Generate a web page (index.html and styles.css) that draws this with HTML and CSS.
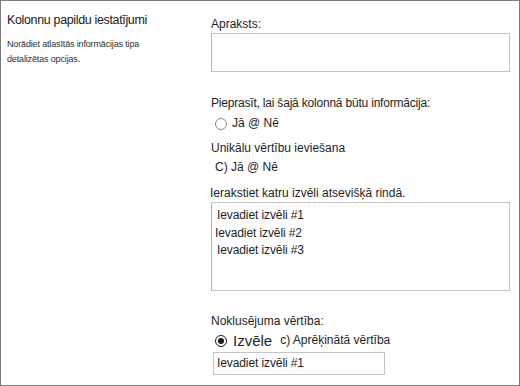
FILE: index.html
```html
<!DOCTYPE html>
<html>
<head>
<meta charset="utf-8">
<link rel="stylesheet" href="styles.css">
</head>
<body>
<div class="frame">
  <div class="side">
    <div class="side-title">Kolonnu papildu iestatījumi</div>
    <div class="side-desc">Norādiet atlasītās informācijas tipa detalizētas opcijas.</div>
  </div>
  <div class="main">
    <div class="label l-desc">Apraksts:</div>
    <div class="box box-desc"></div>

    <div class="label l-req">Pieprasīt, lai šajā kolonnā būtu informācija:</div>
    <div class="radio-row r-req"><span class="radio"></span><span class="rtext">Jā @ Nē</span></div>

    <div class="label l-uniq">Unikālu vērtību ieviešana</div>
    <div class="plain-row r-uniq">C) Jā @ Nē</div>

    <div class="label l-choices">Ierakstiet katru izvēli atsevišķā rindā.</div>
    <div class="box box-choices">
      <div class="choice c1">Ievadiet izvēli #1</div>
      <div class="choice c2">Ievadiet izvēli #2</div>
      <div class="choice c3">Ievadiet izvēli #3</div>
    </div>

    <div class="label l-default">Noklusējuma vērtība:</div>
    <div class="radio-row r-default"><span class="radio checked"></span><span class="big">Izvēle</span><span class="calc">c) Aprēķinātā vērtība</span></div>
    <div class="input">Ievadiet izvēli #1</div>
  </div>
</div>
</body>
</html>
```
FILE: styles.css
```css
html, body {
  margin: 0;
  padding: 0;
  background: #ffffff;
}
body {
  font-family: "Liberation Sans", Arial, sans-serif;
  color: #1e1e1e;
}
.frame {
  width: 520px;
  height: 386px;
  box-sizing: border-box;
  border: 1px solid #7c7c7c;
  display: grid;
  grid-template-columns: 210px 1fr;
}
.side {
  padding: 12px 0 0 6px;
}
.side-title {
  font-size: 12.5px;
  line-height: 15px;
  letter-spacing: -0.35px;
  color: #202020;
}
.side-desc {
  margin-top: 9px;
  font-size: 9px;
  line-height: 15px;
  letter-spacing: -0.15px;
  width: 150px;
  color: #303030;
}
.main {
  display: flex;
  flex-direction: column;
  align-items: flex-start;
  padding-top: 16px;
}
.label {
  font-size: 12px;
  line-height: 15px;
  white-space: nowrap;
}
.box {
  box-sizing: border-box;
  border: 1px solid #c4c4c4;
  border-left-color: #b4b4b4;
  width: 299px;
  background: #fff;
}
.box-desc {
  margin-top: 1px;
  height: 39px;
}
.l-req {
  margin-top: 24px;
  letter-spacing: -0.2px;
}
.radio-row {
  display: flex;
  align-items: center;
  font-size: 12px;
  line-height: 15px;
  padding-left: 4px;
}
.r-req {
  margin-top: 5px;
}
.radio {
  width: 12px;
  height: 12px;
  box-sizing: border-box;
  border: 1px solid #8a8a8a;
  border-radius: 50%;
  background: #fff;
  margin-right: 5px;
  position: relative;
}
.radio.checked {
  border-color: #1a1a1a;
}
.radio.checked::after {
  content: "";
  position: absolute;
  left: 2px;
  top: 2px;
  width: 6px;
  height: 6px;
  border-radius: 50%;
  background: #1a1a1a;
}
.l-uniq {
  margin-top: 10px;
}
.plain-row {
  font-size: 12px;
  line-height: 15px;
  padding-left: 4px;
}
.r-uniq {
  margin-top: 4px;
}
.l-choices {
  margin-top: 11px;
  margin-left: -1px;
  background: #fff;
  padding-right: 4px;
}
.box-choices {
  margin-top: 1px;
  height: 89px;
  padding-top: 4px;
}
.choice {
  font-size: 12px;
  line-height: 17.5px;
  letter-spacing: -0.1px;
}
.c1, .c3 {
  padding-left: 5px;
}
.c2 {
  padding-left: 3px;
}
.l-default {
  margin-top: 23px;
}
.r-default {
  margin-top: 3px;
}
.big {
  font-size: 15px;
  line-height: 17px;
  margin-left: 1px;
}
.calc {
  margin-left: 8px;
}
.input {
  box-sizing: border-box;
  margin-top: 3px;
  margin-left: 2px;
  width: 172px;
  height: 23px;
  border: 1px solid #c4c4c4;
  font-size: 12px;
  line-height: 21px;
  padding-left: 3px;
  letter-spacing: -0.1px;
}
```
